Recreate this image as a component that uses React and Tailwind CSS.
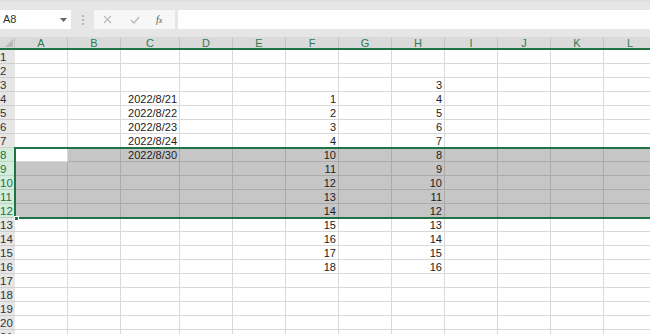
import React from "react";

const cols = [
  { l: "A", w: "w-[53px]" },
  { l: "B", w: "w-[53px]" },
  { l: "C", w: "w-[59px]" },
  { l: "D", w: "w-[53px]" },
  { l: "E", w: "w-[53px]" },
  { l: "F", w: "w-[53px]" },
  { l: "G", w: "w-[53px]" },
  { l: "H", w: "w-[53px]" },
  { l: "I", w: "w-[53px]" },
  { l: "J", w: "w-[53px]" },
  { l: "K", w: "w-[53px]" },
  { l: "L", w: "w-[53px]" },
];

const data = {
  3: { H: "3" },
  4: { C: "2022/8/21", F: "1", H: "4" },
  5: { C: "2022/8/22", F: "2", H: "5" },
  6: { C: "2022/8/23", F: "3", H: "6" },
  7: { C: "2022/8/24", F: "4", H: "7" },
  8: { C: "2022/8/30", F: "10", H: "8" },
  9: { F: "11", H: "9" },
  10: { F: "12", H: "10" },
  11: { F: "13", H: "11" },
  12: { F: "14", H: "12" },
  13: { F: "15", H: "13" },
  14: { F: "16", H: "14" },
  15: { F: "17", H: "15" },
  16: { F: "18", H: "16" },
};

const rows = Array.from({ length: 21 }, (_, i) => i + 1);

export default function App() {
  return (
    <div
      className="relative w-[650px] h-[334px] overflow-hidden bg-white text-[11px]"
      style={{ fontFamily: '"Liberation Sans", Arial, sans-serif' }}
    >
      {/* toolbar */}
      <div className="h-[37px] bg-[#e6e6e6] border-t-2 border-[#dedede] flex items-start pt-[8px] shrink-0">
        <div className="w-[71px] h-[19px] bg-white flex items-center justify-between pl-[3px] pr-[4px] text-[11px] text-[#333]">
          <span>A8</span>
          <svg width="7" height="4" viewBox="0 0 7 4">
            <path d="M0 0 L7 0 L3.5 4 Z" fill="#666" />
          </svg>
        </div>
        <div className="w-[23px] h-[19px] flex flex-col items-center justify-center gap-[2px]">
          <span className="w-[2px] h-[2px] bg-[#b5b5b5]" />
          <span className="w-[2px] h-[2px] bg-[#b5b5b5]" />
          <span className="w-[2px] h-[2px] bg-[#b5b5b5]" />
        </div>
        <div className="w-[81px] h-[19px] bg-[#f7f7f7] flex items-center">
          <svg className="ml-[9px]" width="9" height="9" viewBox="0 0 9 9">
            <path d="M1 1 L8 8 M8 1 L1 8" stroke="#b8b8b8" strokeWidth="1.1" fill="none" />
          </svg>
          <svg className="ml-[18px]" width="10" height="8" viewBox="0 0 10 8">
            <path d="M1 4 L4 7 L9 1" stroke="#b8b8b8" strokeWidth="1.2" fill="none" />
          </svg>
          <span
            className="ml-[16px] text-[10px] italic text-[#555] leading-none"
            style={{ fontFamily: '"Liberation Serif", "Times New Roman", serif' }}
          >
            f<span className="text-[8px]">x</span>
          </span>
        </div>
        <div className="ml-[3px] flex-1 h-[19px] bg-white" />
      </div>

      {/* column header */}
      <div className="flex h-[13px] bg-[#dadada] border-b-2 border-[#217346]">
        <div className="w-[15px] shrink-0 h-[11px] relative border-r border-[#c4c4c4] bg-[#dadada]">
          <svg className="absolute right-[1px] bottom-[1px]" width="8" height="8" viewBox="0 0 8 8">
            <path d="M8 0 L8 8 L0 8 Z" fill="#b9b9b9" />
          </svg>
        </div>
        {cols.map((c) => (
          <div
            key={c.l}
            className={`${c.w} shrink-0 h-[11px] border-r border-[#c4c4c4] flex items-center justify-center text-[11px] text-[#2e7a50] leading-none pt-px`}
          >
            {c.l}
          </div>
        ))}
      </div>

      {/* rows */}
      <div className="flex flex-col">
        {rows.map((r) => {
          const sel = r >= 8 && r <= 12;
          return (
            <div key={r} className="flex h-[14px]">
              <div
                className={
                  sel
                    ? "w-[15px] shrink-0 h-[14px] bg-[#d3ecdc] border-b border-[#b9d6c3] text-[#217346] text-[11.5px] leading-[15px] overflow-hidden whitespace-nowrap"
                    : "w-[15px] shrink-0 h-[14px] bg-[#e6e6e6] border-b border-[#cfcfcf] text-[#333] text-[11.5px] leading-[15px] overflow-hidden whitespace-nowrap"
                }
              >
                {r}
              </div>
              {cols.map((c) => {
                const v = data[r] && data[r][c.l];
                const active = r === 8 && c.l === "A";
                let cls;
                if (sel && !active) {
                  cls = `${c.w} shrink-0 h-[14px] bg-[#c6c6c6] border-r border-b border-[#ababab] text-right pr-[2px] text-[#222] leading-[15px] whitespace-nowrap overflow-hidden`;
                } else {
                  cls = `${c.w} shrink-0 h-[14px] bg-white border-r border-b border-[#d9d9d9] text-right pr-[2px] text-[#222] leading-[15px] whitespace-nowrap overflow-hidden`;
                }
                return (
                  <div key={c.l} className={cls}>
                    {v || ""}
                  </div>
                );
              })}
            </div>
          );
        })}
      </div>

      {/* selection border overlay */}
      <div className="absolute left-[14px] top-[147px] w-[660px] h-[72px] border-2 border-[#217346] pointer-events-none" />
      <div className="absolute left-[14px] top-[216px] w-[5px] h-[5px] bg-[#217346] border border-white" />
    </div>
  );
}
